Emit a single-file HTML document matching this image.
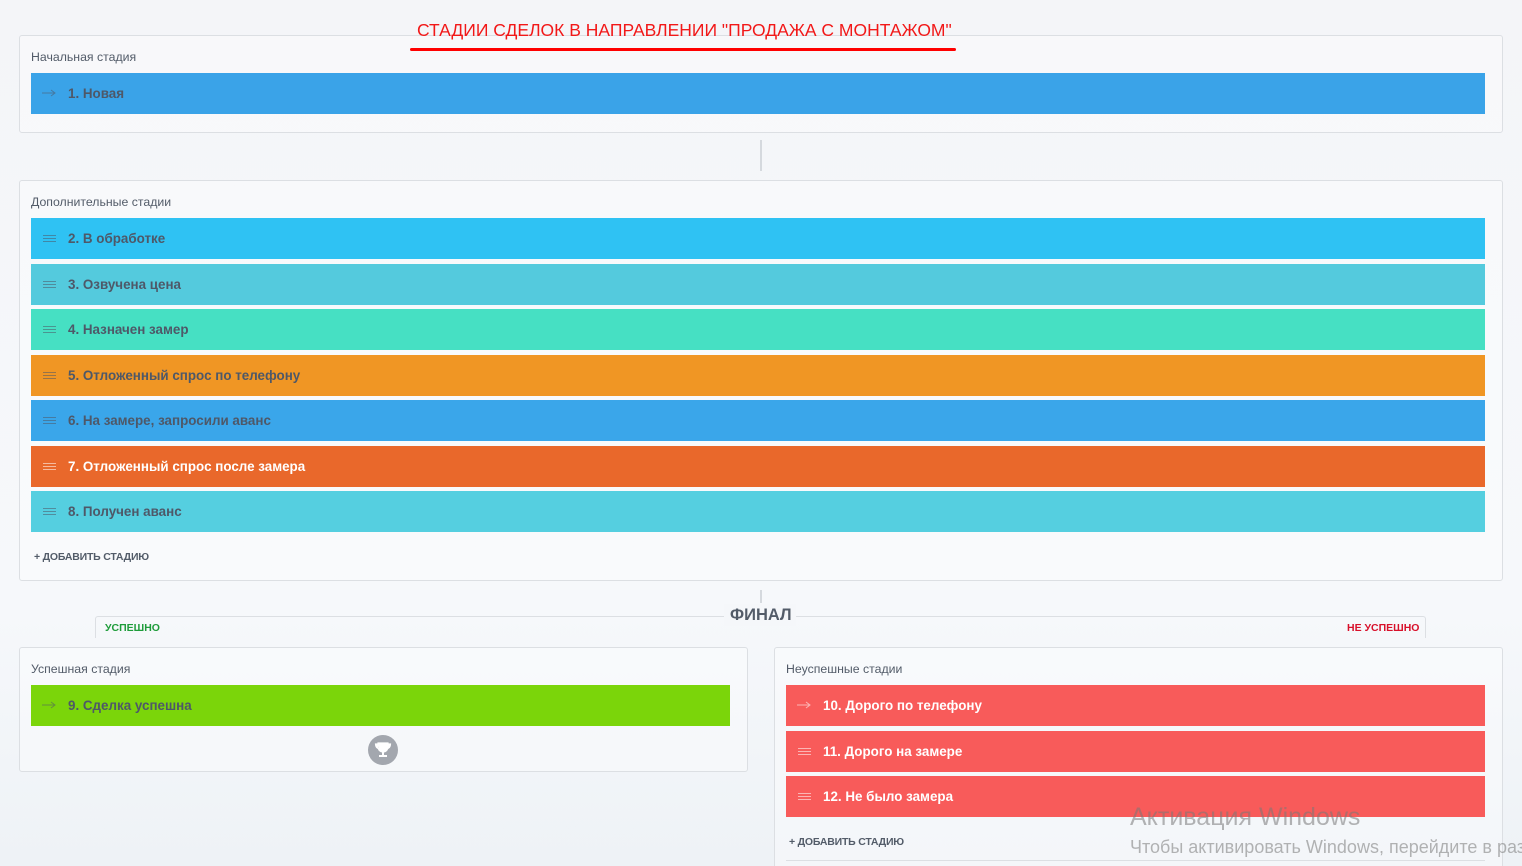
<!DOCTYPE html>
<html><head><meta charset="utf-8"><style>
*{margin:0;padding:0;box-sizing:border-box}
html{overflow:hidden;width:1522px;height:866px}
body{width:1522px;height:866px;overflow:hidden;background:linear-gradient(#f4f5f8,#f6f8fb 70%,#eef2f6);font-family:"Liberation Sans",Arial,sans-serif;position:relative}
.box{position:absolute;border:1px solid #dcdfe3;border-radius:3px;background:rgba(255,255,255,0.35)}
.lbl{position:absolute;font-size:12.3px;color:#535c69}
.bar{position:absolute;height:41px;font-size:13.4px;font-weight:bold;color:#4e5868;line-height:41px;padding-left:37px;white-space:nowrap}
.bar .ic{position:absolute;left:12px;top:17px;width:13px;height:7px;border-top:1px solid;border-bottom:1px solid;opacity:.55}
.bar .ic:after{content:"";position:absolute;left:0;right:0;top:2px;border-top:1px solid}
.bar .ar{position:absolute;left:11px;top:14px;width:14px;height:12px;opacity:.55}
.w{color:#fff}
.add{position:absolute;font-size:10.5px;font-weight:bold;color:#535c69;letter-spacing:-.2px}
</style></head><body>
<div class="box" style="left:19px;top:35px;width:1484px;height:98px"></div>
<div style="position:absolute;z-index:5;left:417px;top:21px;font-size:17.5px;line-height:18px;color:#f21818;white-space:nowrap">СТАДИИ СДЕЛОК В НАПРАВЛЕНИИ "ПРОДАЖА С МОНТАЖОМ"</div>
<div style="position:absolute;z-index:5;left:410px;top:48px;width:546px;height:3px;background:#f00;border-radius:2px"></div>

<div class="lbl" style="left:31px;top:50px">Начальная стадия</div>
<div class="bar" style="left:31px;top:73px;width:1454px;background:#3aa3e8"><svg class="ar" viewBox="0 0 14 12"><path d="M0 6h13M9 3l4 3-4 3" stroke="currentColor" fill="none"/></svg>1. Новая</div>

<div style="position:absolute;left:760px;top:140px;width:2px;height:31px;background:#d5d9de"></div>

<div class="box" style="left:19px;top:180px;width:1484px;height:401px"></div>
<div class="lbl" style="left:31px;top:195px">Дополнительные стадии</div>
<div class="bar" style="left:31px;top:218px;width:1454px;background:#2fc2f3"><span class="ic"></span>2. В обработке</div>
<div class="bar" style="left:31px;top:264px;width:1454px;background:#54cadd"><span class="ic"></span>3. Озвучена цена</div>
<div class="bar" style="left:31px;top:309px;width:1454px;background:#46e0c3"><span class="ic"></span>4. Назначен замер</div>
<div class="bar" style="left:31px;top:355px;width:1454px;background:#f09624"><span class="ic"></span>5. Отложенный спрос по телефону</div>
<div class="bar" style="left:31px;top:400px;width:1454px;background:#3aa6ea"><span class="ic"></span>6. На замере, запросили аванс</div>
<div class="bar w" style="left:31px;top:446px;width:1454px;background:#e9682b"><span class="ic"></span>7. Отложенный спрос после замера</div>
<div class="bar" style="left:31px;top:491px;width:1454px;background:#55cfe0"><span class="ic"></span>8. Получен аванс</div>
<div class="add" style="left:34px;top:551px">+ ДОБАВИТЬ СТАДИЮ</div>

<div style="position:absolute;left:760px;top:590px;width:2px;height:13px;background:#d5d9de"></div>
<div style="position:absolute;left:95px;top:616px;width:1331px;height:22px;border:1px solid #dcdfe3;border-bottom:none;border-radius:3px 3px 0 0"></div>
<div style="position:absolute;left:724px;top:604px;width:72px;height:22px;background:#f5f7fa"></div>
<div style="position:absolute;left:730px;top:606px;font-size:16.5px;font-weight:bold;color:#535c69">ФИНАЛ</div>
<div style="position:absolute;left:105px;top:622px;font-size:10.5px;font-weight:bold;color:#1e9c3a">УСПЕШНО</div>
<div style="position:absolute;left:1347px;top:622px;font-size:10.5px;font-weight:bold;color:#d8102a">НЕ УСПЕШНО</div>

<div class="box" style="left:19px;top:647px;width:729px;height:125px"></div>
<div class="lbl" style="left:31px;top:662px">Успешная стадия</div>
<div class="bar" style="left:31px;top:685px;width:699px;background:#7bd50a"><svg class="ar" viewBox="0 0 14 12"><path d="M0 6h13M9 3l4 3-4 3" stroke="currentColor" fill="none"/></svg>9. Сделка успешна</div>
<div style="position:absolute;left:368px;top:735px;width:30px;height:30px;border-radius:50%;background:#a3a7ae">
<svg width="30" height="30" viewBox="0 0 30 30"><path d="M10 8h10v4a5 5 0 0 1-10 0z M10 9H7.5c0 3 1.5 4.5 3.5 4.5 M20 9h2.5c0 3-1.5 4.5-3.5 4.5" fill="#fff" stroke="#fff" stroke-width="1.2"/><rect x="14" y="16" width="2" height="4" fill="#fff"/><rect x="11" y="20" width="8" height="2" fill="#fff"/></svg></div>

<div class="box" style="left:774px;top:647px;width:729px;height:230px"></div>
<div class="lbl" style="left:786px;top:662px">Неуспешные стадии</div>
<div class="bar w" style="left:786px;top:685px;width:699px;background:#f85b5a"><svg class="ar" viewBox="0 0 14 12"><path d="M0 6h13M9 3l4 3-4 3" stroke="currentColor" fill="none"/></svg>10. Дорого по телефону</div>
<div class="bar w" style="left:786px;top:731px;width:699px;background:#f85b5a"><span class="ic"></span>11. Дорого на замере</div>
<div class="bar w" style="left:786px;top:776px;width:699px;background:#f85b5a"><span class="ic"></span>12. Не было замера</div>
<div class="add" style="left:789px;top:836px">+ ДОБАВИТЬ СТАДИЮ</div>
<div style="position:absolute;left:786px;top:860px;width:699px;border-top:1px solid #dcdfe3"></div>

<div style="position:absolute;left:1130px;top:803px;font-size:25px;color:rgba(120,120,120,.55);white-space:nowrap">Активация Windows</div>
<div style="position:absolute;left:1130px;top:837px;font-size:18px;color:rgba(120,120,120,.55);white-space:nowrap">Чтобы активировать Windows, перейдите в раз</div>
</body></html>
